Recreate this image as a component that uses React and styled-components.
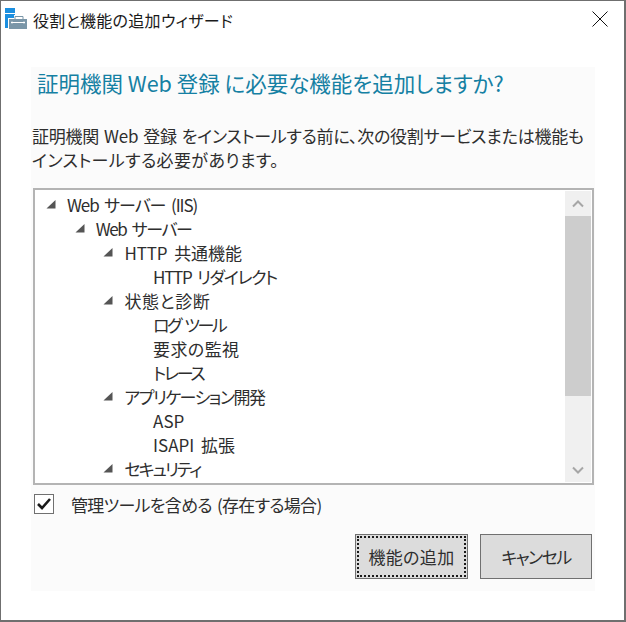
import React from 'react';
import styled, { createGlobalStyle } from 'styled-components';

const GlobalStyle = createGlobalStyle`
  html, body {
    margin: 0;
    padding: 0;
    background: #6f6f6f;
  }
  body {
    font-family: "Noto Sans CJK JP", "Noto Sans", sans-serif;
    font-feature-settings: "palt";
  }
`;

const Window = styled.div`
  box-sizing: border-box;
  width: 625px;
  height: 620px;
  background: #fff;
  border: 1px solid #6f6f6f;
  border-bottom: 0;
  display: flex;
  flex-direction: column;
  overflow: hidden;
`;

const TitleBar = styled.div`
  box-sizing: border-box;
  height: 66px;
  flex: none;
  display: flex;
  align-items: flex-start;
  padding: 6px 16px 0 4px;
`;

const AppIcon = styled.svg`
  width: 24px;
  height: 24px;
  flex: none;
`;

const TitleText = styled.div`
  margin-left: 4px;
  font-size: 16px;
  letter-spacing: 0.3px;
  line-height: 26px;
  color: #1a1a1a;
  flex: 1;
`;

const CloseIcon = styled.svg`
  width: 16px;
  height: 16px;
  margin-top: 4px;
`;

const Panel = styled.div`
  box-sizing: border-box;
  width: 564px;
  height: 524px;
  margin-left: 30px;
  background: #fbfbfb;
  display: flex;
  flex-direction: column;
`;

const Heading = styled.h1`
  margin: 0;
  padding: 1px 0 0 6px;
  font-size: 21.5px;
  font-weight: 400;
  line-height: 30px;
  color: #1580a3;
`;

const Message = styled.p`
  margin: 26px 0 0;
  padding-left: 1px;
  font-size: 17px;
  line-height: 24px;
  color: #2e2e2e;
`;

const MessageLine = styled.span`
  display: block;
  letter-spacing: ${({ $spacing }) => $spacing}px;
  word-spacing: 1.5px;
`;

const ListBox = styled.div`
  box-sizing: border-box;
  margin: 16px 0 0 2px;
  width: 561px;
  height: 297px;
  background: #fff;
  border: 2px solid #b4b4b4;
  display: flex;
`;

const Tree = styled.ul`
  list-style: none;
  margin: 0;
  padding: 2px 0 0;
  flex: 1;
  overflow: hidden;
`;

const Row = styled.li`
  height: 24px;
  display: flex;
  align-items: center;
  padding-left: ${({ $depth }) => 11 + $depth * 28.7}px;
  font-size: 17px;
  letter-spacing: ${({ $spacing }) => $spacing}px;
  word-spacing: 3px;
  color: #2e2e2e;
  white-space: pre;
`;

const Arrow = styled.svg`
  width: 10px;
  height: 10px;
  flex: none;
  margin-right: 11px;
  visibility: ${({ $hidden }) => ($hidden ? 'hidden' : 'visible')};
`;

const ScrollBar = styled.div`
  width: 26px;
  margin: 1px 1px 1px 0;
  background: #f0f0f0;
  display: flex;
  flex-direction: column;
  flex: none;
`;

const ScrollButton = styled.div`
  height: 25px;
  flex: none;
  display: flex;
  align-items: center;
  justify-content: center;
`;

const ScrollTrack = styled.div`
  flex: 1;
`;

const ScrollThumb = styled.div`
  height: 180px;
  background: #cdcdcd;
`;

const CheckRow = styled.label`
  display: flex;
  align-items: center;
  margin: 8px 0 0 3px;
  height: 22px;
  font-size: 17px;
  letter-spacing: -0.7px;
  word-spacing: 2px;
  color: #2e2e2e;
`;

const CheckBox = styled.span`
  box-sizing: border-box;
  width: 20px;
  height: 20px;
  border: 1px solid #707070;
  background: #fff;
  display: flex;
  align-items: center;
  justify-content: center;
  margin-right: 17px;
`;

const Actions = styled.div`
  display: flex;
  justify-content: flex-end;
  gap: 12px;
  margin-top: 19px;
  padding-right: 3px;
`;

const Button = styled.button`
  box-sizing: border-box;
  width: ${({ $width }) => $width}px;
  height: 45px;
  padding: 0;
  background: #dcdcdc;
  border: 1px solid #707070;
  font: inherit;
  font-size: 17px;
  letter-spacing: ${({ $spacing }) => $spacing}px;
  color: #2e2e2e;
  outline: ${({ $focused }) => ($focused ? '2px dotted #1a1a1a' : 'none')};
  outline-offset: -4px;
`;

const rows = [
  ['Web サーバー (IIS)', 0, true, -1.1],
  ['Web サーバー', 1, true, -1.4],
  ['HTTP 共通機能', 2, true, -0.1],
  ['HTTP リダイレクト', 3, false, -1.3],
  ['状態と診断', 2, true, 0.6],
  ['ログ ツール', 3, false, -2.5],
  ['要求の監視', 3, false, 0.4],
  ['トレース', 3, false, -2.2],
  ['アプリケーション開発', 2, true, -1.5],
  ['ASP', 3, false, 0],
  ['ISAPI 拡張', 3, false, 0],
  ['セキュリティ', 2, true, -2],
];

const Chevron = ({ up }) => (
  <svg width="12" height="8" viewBox="0 0 12 8">
    <path d={up ? 'M1 6.5 L6 1.5 L11 6.5' : 'M1 1.5 L6 6.5 L11 1.5'} fill="none" stroke="#a6a6a6" strokeWidth="2" />
  </svg>
);

const App = () => (
  <>
    <GlobalStyle />
    <Window>
      <TitleBar>
        <AppIcon viewBox="0 0 24 24">
          <path d="M0 1h10v5H0zM0 7h10v14H0z" fill="#1b8fe0" />
          <path d="M3 11h6V8h10v3h4v12H3z" fill="#fff" />
          <path d="M10 12V9.5h8V12" fill="none" stroke="#7a96a8" strokeWidth="1" />
          <rect x="4" y="12" width="18" height="10" fill="#7a96a8" />
          <path d="M6 15.5h14M7 14.5v2M19 14.5v2" stroke="#fff" strokeWidth="1" fill="none" />
        </AppIcon>
        <TitleText>役割と機能の追加ウィザード</TitleText>
        <CloseIcon viewBox="0 0 16 16">
          <path d="M0.5 0.5 L15.5 15.5 M15.5 0.5 L0.5 15.5" stroke="#111" strokeWidth="1" fill="none" />
        </CloseIcon>
      </TitleBar>
      <Panel>
        <Heading>証明機関 Web 登録 に必要な機能を追加しますか?</Heading>
        <Message>
          <MessageLine $spacing={-0.25}>証明機関 Web 登録 をインストールする前に、次の役割サービスまたは機能も</MessageLine>
          <MessageLine $spacing={0.4}>インストールする必要があります。</MessageLine>
        </Message>
        <ListBox>
          <Tree>
            {rows.map(([label, depth, open, spacing]) => (
              <Row key={label + depth} $depth={depth} $spacing={spacing}>
                <Arrow $hidden={!open} viewBox="0 0 10 10">
                  <path d="M9.5 1 V9.5 H0.5 Z" fill="#555" />
                </Arrow>
                {label}
              </Row>
            ))}
          </Tree>
          <ScrollBar>
            <ScrollButton><Chevron up /></ScrollButton>
            <ScrollThumb />
            <ScrollTrack />
            <ScrollButton><Chevron /></ScrollButton>
          </ScrollBar>
        </ListBox>
        <CheckRow>
          <CheckBox>
            <svg width="14" height="12" viewBox="0 0 14 12">
              <path d="M1 6 L5 10 L13 1" fill="none" stroke="#1a1a1a" strokeWidth="2.6" />
            </svg>
          </CheckBox>
          管理ツールを含める (存在する場合)
        </CheckRow>
        <Actions>
          <Button $width={113} $focused $spacing={0.3}>機能の追加</Button>
          <Button $width={112} $spacing={-1.5}>キャンセル</Button>
        </Actions>
      </Panel>
    </Window>
  </>
);

export default App;
